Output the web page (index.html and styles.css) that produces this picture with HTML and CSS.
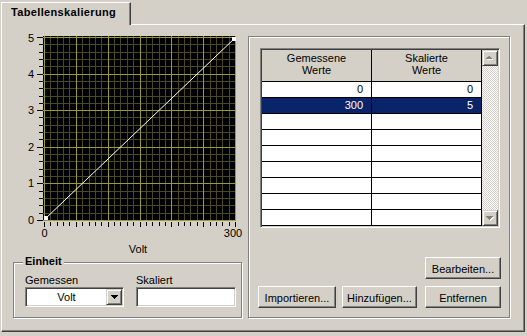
FILE: index.html
```html
<!DOCTYPE html>
<html lang="de">
<head>
  <meta charset="UTF-8">
  <title>Tabellenskalierung</title>
  <link rel="stylesheet" href="styles.css">
</head>
<body>

  <div class="tabs">
    <div class="tab">Tabellenskalierung</div>
  </div>

  <div class="panel">
    <div class="left">
      <svg class="chart" width="246" height="237" viewBox="2 25 246 237">
        <rect x="43" y="36" width="193" height="185" fill="#000"/>
        <path class="grid-minor" d="M50.5 36v185M57.5 36v185M63.5 36v185M69.5 36v185M82.5 36v185M89.5 36v185M95.5 36v185M101.5 36v185M114.5 36v185M120.5 36v185M127.5 36v185M133.5 36v185M146.5 36v185M152.5 36v185M159.5 36v185M165.5 36v185M178.5 36v185M184.5 36v185M190.5 36v185M197.5 36v185M210.5 36v185M216.5 36v185M222.5 36v185M229.5 36v185
          M43 213.5h193M43 205.5h193M43 198.5h193M43 191.5h193M43 176.5h193M43 169.5h193M43 161.5h193M43 154.5h193M43 139.5h193M43 132.5h193M43 125.5h193M43 117.5h193M43 103.5h193M43 96.5h193M43 88.5h193M43 81.5h193M43 66.5h193M43 59.5h193M43 52.5h193M43 44.5h193"/>
        <path class="grid-major" d="M44.5 36v185M76.5 36v185M108.5 36v185M140.5 36v185M171.5 36v185M203.5 36v185M235.5 36v185
          M43 220.5h193M43 183.5h193M43 147.5h193M43 110.5h193M43 74.5h193M43 37.5h193"/>
        <!-- achsen-striche -->
        <path class="ticks" d="M37 220.5h6M37 183.5h6M37 147.5h6M37 110.5h6M37 74.5h6M37 37.5h6
          M39 213.5h4M39 205.5h4M39 198.5h4M39 191.5h4M39 176.5h4M39 169.5h4M39 161.5h4M39 154.5h4M39 139.5h4M39 132.5h4M39 125.5h4M39 117.5h4M39 103.5h4M39 96.5h4M39 88.5h4M39 81.5h4M39 66.5h4M39 59.5h4M39 52.5h4M39 44.5h4
          M44.5 222v5M76.5 222v5M108.5 222v5M140.5 222v5M171.5 222v5M203.5 222v5M235.5 222v5
          M50.5 222v4M57.5 222v4M63.5 222v4M69.5 222v4M82.5 222v4M89.5 222v4M95.5 222v4M101.5 222v4M114.5 222v4M120.5 222v4M127.5 222v4M133.5 222v4M146.5 222v4M152.5 222v4M159.5 222v4M165.5 222v4M178.5 222v4M184.5 222v4M190.5 222v4M197.5 222v4M210.5 222v4M216.5 222v4M222.5 222v4M229.5 222v4"/>
        <path class="curve" d="M44.5 219.5L235.5 37.5"/>
        <rect x="44" y="216" width="4" height="4" fill="#fff"/>
        <rect x="232" y="37" width="4" height="4" fill="#fff"/>
        <text class="axis" x="34" y="42" text-anchor="end">5</text>
        <text class="axis" x="34" y="78" text-anchor="end">4</text>
        <text class="axis" x="34" y="114" text-anchor="end">3</text>
        <text class="axis" x="34" y="151" text-anchor="end">2</text>
        <text class="axis" x="34" y="187" text-anchor="end">1</text>
        <text class="axis" x="34" y="224" text-anchor="end">0</text>
        <text class="axis" x="44.5" y="237" text-anchor="middle">0</text>
        <text class="axis" x="233" y="237" text-anchor="middle">300</text>
        <text class="axis" x="138" y="253" text-anchor="middle">Volt</text>
      </svg>

      <div class="group">
        <div class="group-title">Einheit</div>
        <div class="fields">
          <div class="field">
            <label>Gemessen</label>
            <div class="sunken combo">
              <span class="combo-text">Volt</span>
              <span class="raised combo-btn">
                <svg width="7" height="4"><path d="M0 0h7v1H0zM1 1h5v1H1zM2 2h3v1H2zM3 3h1v1H3z" fill="#000"/></svg>
              </span>
            </div>
          </div>
          <div class="field">
            <label>Skaliert</label>
            <div class="sunken edit"></div>
          </div>
        </div>
      </div>
    </div>

    <div class="frame">
      <div class="grid-box">
        <table class="grid">
          <tr>
            <th>Gemessene<br>Werte</th>
            <th>Skalierte<br>Werte</th>
          </tr>
          <tr><td>0</td><td>0</td></tr>
          <tr class="selected"><td>300</td><td>5</td></tr>
          <tr><td></td><td></td></tr>
          <tr><td></td><td></td></tr>
          <tr><td></td><td></td></tr>
          <tr><td></td><td></td></tr>
          <tr><td></td><td></td></tr>
          <tr><td></td><td></td></tr>
          <tr><td></td><td></td></tr>
        </table>
        <div class="scrollbar">
          <div class="raised scroll-btn">
            <svg width="8" height="5"><path d="M4 1h1v1h1v1h1v1H1V3h1V2h1V1z" fill="#fff"/><path d="M3 0h1v1h1v1h1v1H0V2h1V1h1z" fill="#808080"/></svg>
          </div>
          <div class="scroll-track"></div>
          <div class="raised scroll-btn">
            <svg width="8" height="5"><path d="M1 1h7v1H7v1H6v1H5v1H4V4H3V3H2V2H1z" fill="#fff"/><path d="M0 0h7v1H6v1H5v1H4v1H3V3H2V2H1V1H0z" fill="#808080"/></svg>
          </div>
        </div>
      </div>

      <div class="buttons">
        <div class="btn-row end">
          <button class="btn w76">Bearbeiten...</button>
        </div>
        <div class="btn-row">
          <button class="btn w78">Importieren...</button>
          <button class="btn w75 gap6">Hinzufügen...</button>
          <button class="btn w76 gap8">Entfernen</button>
        </div>
      </div>
    </div>
  </div>

</body>
</html>
```

FILE: styles.css
```css
body {
  margin: 0;
  background-color: #d4d0c8;
  font-family: "Liberation Sans", Arial, sans-serif;
  font-size: 11px;
  color: #000;
}

/* reiter */
.tabs {
  height: 24px;
  padding-left: 1px;
  display: flex;
  align-items: flex-end;
}
.tab {
  position: relative;
  z-index: 1;
  width: 130px;
  height: 23px;
  margin-bottom: -1px;
  box-sizing: border-box;
  padding: 3px 0 0 9px;
  border-left: 1px solid #fff;
  border-top: 1px solid #fff;
  border-right: 1px solid #404040;
  box-shadow: inset -1px 0 0 #808080;
  background-color: #d4d0c8;
  font-weight: bold;
  letter-spacing: 0.35px;
}

.panel {
  margin-left: 1px;
  width: 524px;
  height: 308px;
  box-sizing: border-box;
  border: 1px solid;
  border-color: #fff #404040 #404040 #fff;
  box-shadow: inset -1px -1px 0 #808080;
  display: flex;
}

/* linke seite: graph + einheit */
.left {
  width: 246px;
  display: flex;
  flex-direction: column;
}
.chart {
  display: block;
}
.grid-minor {
  stroke: #4a4a22;
  fill: none;
}
.grid-major {
  stroke: #9a9a3a;
  fill: none;
}
.ticks {
  stroke: #000;
  fill: none;
}
.curve {
  stroke: #fff;
  fill: none;
}
.axis {
  font-family: "Liberation Sans", Arial, sans-serif;
  font-size: 11px;
  fill: #000;
}

.group {
  margin-left: 11px;
  width: 229px;
  height: 56px;
  box-sizing: border-box;
  border: 1px solid #808080;
  box-shadow: 1px 1px 0 #fff, inset 1px 1px 0 #fff;
}
.group-title {
  display: table;
  margin: -8px 0 0 9px;
  padding: 0 2px;
  line-height: 13px;
  background-color: #d4d0c8;
  font-weight: bold;
}
.fields {
  display: flex;
  gap: 12px;
  padding: 6px 0 0 11px;
}
.field label {
  display: block;
  line-height: 13px;
}

.sunken {
  box-sizing: border-box;
  height: 20px;
  padding: 1px;
  border: 1px solid;
  border-color: #808080 #fff #fff #808080;
  box-shadow: inset 1px 1px 0 #404040, inset -1px -1px 0 #d4d0c8;
  background-color: #fff;
}
.raised {
  box-sizing: border-box;
  border: 1px solid;
  border-color: #d4d0c8 #404040 #404040 #d4d0c8;
  box-shadow: inset 1px 1px 0 #fff, inset -1px -1px 0 #808080;
  background-color: #d4d0c8;
  display: flex;
  align-items: center;
  justify-content: center;
}
.combo {
  width: 99px;
  display: flex;
}
.combo-text {
  flex: 1;
  text-align: center;
  line-height: 16px;
}
.combo-btn {
  width: 16px;
  height: 16px;
}
.combo-btn svg {
  display: block;
}
.edit {
  width: 100px;
}

/* rechte seite: tabelle + knöpfe */
.frame {
  margin-top: 11px;
  width: 262px;
  height: 282px;
  box-sizing: border-box;
  border: 1px solid #808080;
  box-shadow: 1px 1px 0 #fff, inset 1px 1px 0 #fff;
  display: flex;
  flex-direction: column;
}
.grid-box {
  margin: 11px 0 0 11px;
  width: 240px;
  height: 180px;
  box-sizing: border-box;
  padding: 1px;
  border: 1px solid;
  border-color: #808080 #fff #fff #808080;
  box-shadow: inset 1px 1px 0 #404040, inset -1px -1px 0 #d4d0c8;
  display: flex;
}
.grid {
  border-collapse: separate;
  border-spacing: 0;
  table-layout: fixed;
  width: 220px;
}
.grid th {
  width: 109px;
  height: 29px;
  padding: 2px 0 0 0;
  vertical-align: top;
  border-right: 1px solid #000;
  border-bottom: 1px solid #000;
  background-color: #d4d0c8;
  font-weight: normal;
  line-height: 12px;
  text-align: center;
}
.grid td {
  width: 101px;
  height: 15px;
  padding: 0 8px 0 0;
  border-right: 1px solid #000;
  border-bottom: 1px solid #000;
  background-color: #fff;
  line-height: 15px;
  text-align: right;
}
.grid tr.selected td {
  background-color: #0a246a;
  color: #fff;
}

.scrollbar {
  width: 16px;
  display: flex;
  flex-direction: column;
}
.scroll-btn {
  height: 16px;
}
.scroll-btn svg {
  display: block;
}
.scroll-track {
  flex: 1;
  background: repeating-conic-gradient(#fff 0 25%, #d4d0c8 0 50%) 0 0 / 2px 2px;
}

.buttons {
  margin-top: auto;
  padding: 0 8px 9px 9px;
}
.btn-row {
  display: flex;
}
.btn-row.end {
  justify-content: flex-end;
  margin-bottom: 7px;
}
.btn {
  height: 22px;
  box-sizing: border-box;
  padding: 1px 0 0 0;
  border: 1px solid;
  border-color: #fff #404040 #404040 #fff;
  box-shadow: inset -1px -1px 0 #808080;
  background-color: #d4d0c8;
  font-family: "Liberation Sans", Arial, sans-serif;
  font-size: 11px;
  color: #000;
}
.w75 { width: 75px; }
.w76 { width: 76px; }
.w78 { width: 78px; }
.gap6 { margin-left: 6px; }
.gap8 { margin-left: 8px; }
```
